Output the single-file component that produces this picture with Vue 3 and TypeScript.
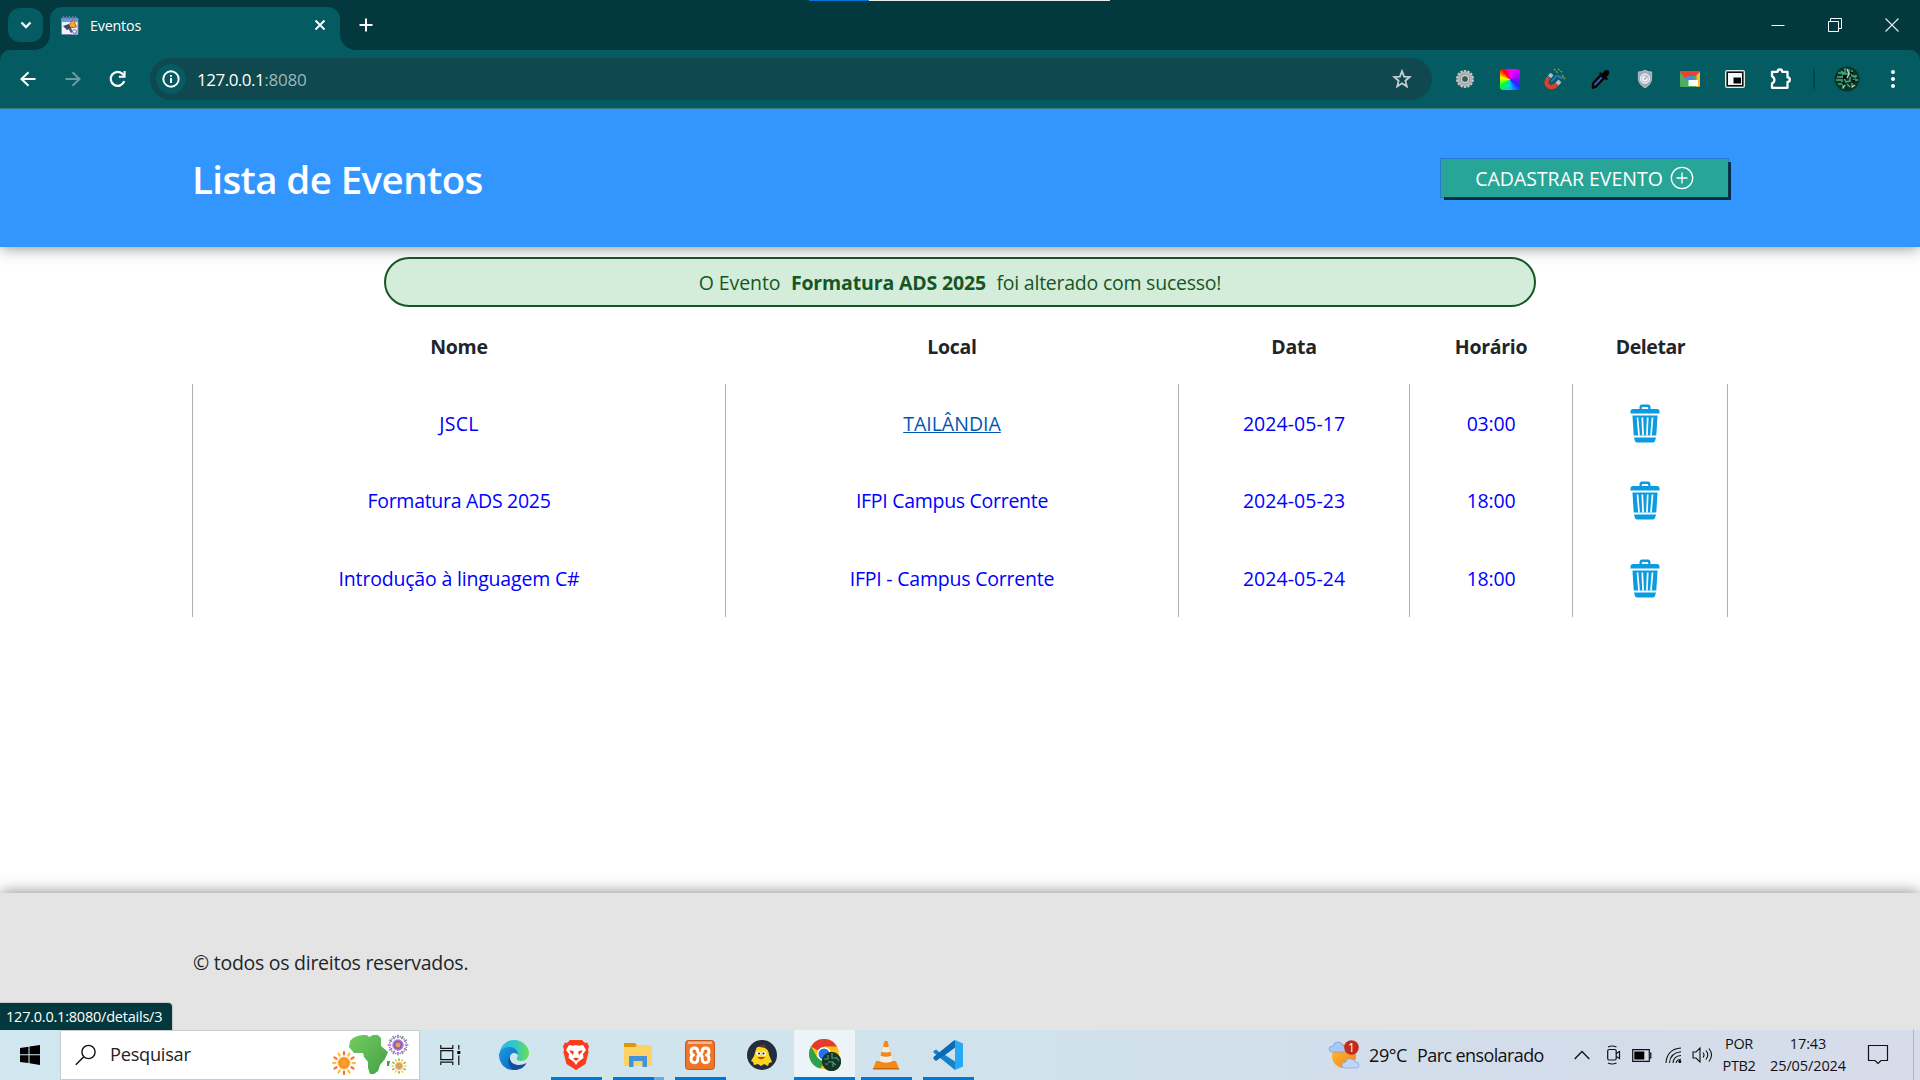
<script setup lang="ts">
interface Cell { text: string; ls: number; hover?: boolean }
interface Evento { id: number; cells: Cell[] }

const headings: Cell[] = [
  { text: 'Nome', ls: -0.25 },
  { text: 'Local', ls: -0.3 },
  { text: 'Data', ls: -0.3 },
  { text: 'Horário', ls: -0.3 },
  { text: 'Deletar', ls: -0.45 },
]

const eventos: Evento[] = [
  {
    id: 3,
    cells: [
      { text: 'JSCL', ls: 0.3 },
      { text: 'TAILÂNDIA', ls: 0 },
      { text: '2024-05-17', ls: 0.05 },
      { text: '03:00', ls: -0.2 },
    ],
  },
  {
    id: 4,
    cells: [
      { text: 'Formatura ADS 2025', ls: -0.29 },
      { text: 'IFPI Campus Corrente', ls: -0.29 },
      { text: '2024-05-23', ls: 0.05 },
      { text: '18:00', ls: -0.2 },
    ],
  },
  {
    id: 5,
    cells: [
      { text: 'Introdução à linguagem C#', ls: -0.19 },
      { text: 'IFPI - Campus Corrente', ls: -0.21 },
      { text: '2024-05-24', ls: 0.05 },
      { text: '18:00', ls: -0.2 },
    ],
  },
]
eventos[0].cells[1].hover = true

const rays = [0, 30, 60, 90, 120, 150, 180, 210, 240, 270, 300, 330]
const teeth = Array.from({ length: 14 }, (_, i) => (i * 360) / 14)
</script>

<template>
  <div class="screen">
    <div class="tabstrip">
      <i class="topline"></i>
      <button class="tab-search">
        <svg width="12" height="12" viewBox="0 0 12 12"><path d="M1.500 3.500 6 8l4.500-4.500" fill="none" stroke="#fff" stroke-width="2.300" /></svg>
      </button>
      <div class="tab">
        <svg class="favicon" width="20" height="21" viewBox="0 0 20 21">
          <rect x="1.500" y="3" width="16.500" height="16.500" rx="1" fill="#f1f1f8" stroke="#7c83ad" />
          <path d="M1.500 3h16.500v4H1.500z" fill="#5b9de8" />
          <path d="M3.500 1v3M6.500 1v3M9.500 1v3M12.500 1v3M15.500 1v3" stroke="#7d6e9c" stroke-width="1.200" />
          <path d="m8.500 10 5-5.500 3 7.500-7 1z" fill="#f9a72b" stroke="#a84a26" stroke-width=".8" />
          <path d="m3 11 6-2 2 4-4 2z" fill="#3c4563" />
          <path d="m8 13 3 5 2-1-2-4z" fill="#4e5880" />
          <path d="M18 14v5.500h-6z" fill="#adb4dc" />
          <circle cx="14.500" cy="16.500" r="1.800" fill="#fff" stroke="#6372ad" />
        </svg>
        <span class="tab-title">Eventos</span>
        <svg class="tab-close" width="12" height="12" viewBox="0 0 12 12"><path d="m1.500 1.500 9 9m0-9-9 9" stroke="#fff" stroke-width="1.900" /></svg>
      </div>
      <svg class="new-tab" width="14" height="14" viewBox="0 0 14 14"><path d="M7 .5v13M.5 7h13" stroke="#fff" stroke-width="2" /></svg>
      <div class="win-controls">
        <span><svg width="14" height="14" viewBox="0 0 14 14"><path d="M.5 7.500h13" stroke="#fff" /></svg></span>
        <span><svg width="14" height="14" viewBox="0 0 14 14"><path d="M.5 3.500h10v10H.5zM2.500 3.500v-3h11v10h-3" fill="none" stroke="#fff" /></svg></span>
        <span><svg width="14" height="14" viewBox="0 0 14 14"><path d="m.5.5 13 13m0-13-13 13" stroke="#dfe7e8" stroke-width="1.200" /></svg></span>
      </div>
    </div>

    <div class="toolbar-wrap">
      <div class="toolbar">
        <div class="nav">
          <svg width="20" height="20" viewBox="0 0 20 20"><path d="M17.500 10H4m6.500-6.700L3.500 10l7 6.700" fill="none" stroke="#fff" stroke-width="2.100" /></svg>
          <svg width="20" height="20" viewBox="0 0 20 20"><path d="M2.500 10H16M9.500 3.300l7 6.700-7 6.700" fill="none" stroke="#6a9da0" stroke-width="2" /></svg>
          <svg width="20" height="20" viewBox="0 0 20 20"><path d="M16.300 12.200A7 7 0 1 1 14.800 5l1.700 1.700" fill="none" stroke="#fff" stroke-width="2.200" /><path d="M17.600 2v6.700h-6.700v-2h4.700V2z" fill="#fff" /></svg>
        </div>
        <div class="omnibox">
          <span class="info">
            <svg width="18" height="18" viewBox="0 0 18 18"><circle cx="9" cy="9" r="7.700" fill="none" stroke="#fff" stroke-width="1.900" /><path d="M9 8v5M9 4.900v1.900" stroke="#fff" stroke-width="2" /></svg>
          </span>
          <span class="url">127.0.0.1</span><span class="port">:8080</span>
          <svg class="star" width="20" height="20" viewBox="0 0 20 20"><path d="m10 2.200 2.100 5.400 5.700.4-4.400 3.700 1.400 5.700-4.800-3.100-4.800 3.100 1.400-5.700L2.200 8l5.700-.4z" fill="none" stroke="#c4cfd1" stroke-width="1.800" /></svg>
        </div>
        <div class="extensions">
          <svg width="20" height="20" viewBox="0 0 20 20">
            <rect v-for="t in teeth" :key="t" x="8.700" y="1" width="2.600" height="4" rx=".5" fill="#c6c6c6" :transform="`rotate(${t} 10 10)`" />
            <circle cx="10" cy="10" r="7.300" fill="#b4b4b4" />
            <circle cx="10" cy="10" r="4.700" fill="#d6d6d6" stroke="#999" />
            <circle cx="10" cy="10" r="2.600" fill="#17676b" stroke="#555" stroke-width=".8" />
          </svg>
          <i class="wheel"></i>
          <svg width="22" height="22" viewBox="0 0 22 22">
            <path d="M5 9.500c-4 4-3 7 0 9 3 1.500 6 0 9-3.500" fill="none" stroke="#d9412f" stroke-width="4.300" />
            <path d="m5.500 9 2.500-3M13 16l3-3" stroke="#a9bfd0" stroke-width="4" />
            <path d="M7 13c3 1 3-6 7-5 2 1 3 3 6 1" fill="none" stroke="#2877c6" stroke-width="2" />
            <path d="m10 1 4 4m0-4 5 4m-1 2 3 4" stroke="#9d9733" stroke-width="1.300" stroke-dasharray="2 1.200" />
          </svg>
          <svg width="20" height="22" viewBox="0 0 20 22">
            <path d="m3 15.500 8-8.500 3 3-8 8.500-3 1z" fill="#3e59c5" stroke="#050505" stroke-width="2.400" />
            <path d="M9 5.500 10.500 4l2 1.500C14 2 18 1 19 3.500s-1 4.500-2.500 5.500L18 11l-1.500 1.500z" fill="#050505" />
          </svg>
          <svg class="shield" width="16" height="20" viewBox="0 0 18 22">
            <path d="M9 1c2.500 1.500 5 2 7.500 2v7c0 5-3 8.500-7.500 11-4.500-2.500-7.500-6-7.500-11V3C4 3 6.500 2.500 9 1z" fill="#a3a9ba" stroke="#cfd4de" stroke-width=".8" />
            <circle cx="9" cy="10.500" r="5.200" fill="#bcc3d2" stroke="#f1f3f7" stroke-width="1.300" />
            <path d="M11.500 10.500A2.500 2.500 0 1 1 9 8" fill="none" stroke="#fff" stroke-width="1.300" />
          </svg>
          <svg width="22" height="18" viewBox="0 0 22 18">
            <rect x="1" y="1" width="20" height="16" rx="1.500" fill="#4fae5c" />
            <path d="M2 1h18l1 1v4H11L6 8 1 2z" fill="#ea4335" />
            <path d="M17.500 5 21 2v14l-1 1h-2.500z" fill="#fbbc2e" />
            <path d="M14.500 5.500V11H9L5.500 8z" fill="#4285f4" />
            <path d="M9.500 10h9.500v6H9.500z" fill="#fff" />
          </svg>
          <svg width="22" height="20" viewBox="0 0 22 20">
            <rect x="1" y="1" width="20" height="18" rx="2" fill="#e4eaea" />
            <rect x="3.200" y="3.200" width="15.600" height="13.600" fill="#f5f8f8" stroke="#0c0f10" stroke-width="1.600" />
            <rect x="9.500" y="8.500" width="7.500" height="6" fill="#05080a" />
          </svg>
          <svg class="puzzle" width="22" height="22" viewBox="0 0 22 22"><path d="M2 3.800h5.600a2.300 2.300 0 0 1 4.600 0h5.300v5.600a2.300 2.300 0 0 1 0 4.600v5.800H2v-4.400q2.400-.8 2.400-3.400T2 8.200z" fill="none" stroke="#fff" stroke-width="2.300" stroke-linejoin="round" /></svg>
        </div>
        <i class="divider"></i>
        <svg class="avatar" width="26" height="26" viewBox="0 0 26 26">
          <circle cx="13" cy="13" r="12.500" fill="#0f3426" />
          <path d="M4 7h5v4H3m8-9v6h4V3m3 1v6h5M2 14h6v4H4m6-6 2 4 4-1v-4m3 3h5m-6 3v5m-9-5v6m4-5 3 3M7 5l4 3m8 2 3 2" fill="none" stroke="#3fae7e" stroke-width="1.400" />
          <path d="M9 9h4v4H9zM16 6h3v3M7 16h3v4M17 14h4v3" fill="#04100b" />
          <path d="m13 3 2 5-2 4m-2 7-2 3m9-1 3-2" fill="none" stroke="#b5e2cb" stroke-width="1.300" />
        </svg>
        <svg class="menu" width="6" height="20" viewBox="0 0 6 20"><g fill="#fff"><circle cx="3" cy="3" r="2" /><circle cx="3" cy="10" r="2" /><circle cx="3" cy="17" r="2" /></g></svg>
      </div>
    </div>

    <div class="page">
      <header class="header">
        <h1>Lista de Eventos</h1>
        <a class="btn">
          <span>CADASTRAR EVENTO</span>
          <svg width="24" height="24" viewBox="0 0 24 24"><circle cx="12" cy="12" r="10.700" fill="none" stroke="#fff" stroke-width="1.300" /><path d="M12 6.500v11M6.500 12h11" stroke="#fff" stroke-width="1.300" /></svg>
        </a>
      </header>

      <main class="main">
        <div class="alert"><span class="first">O Evento</span><strong>Formatura ADS 2025</strong><span class="tight">foi alterado com sucesso!</span></div>
        <div class="grid head">
          <div v-for="h in headings" :key="h.text" :style="{ letterSpacing: h.ls + 'px' }">{{ h.text }}</div>
        </div>
        <div v-for="e in eventos" :key="e.id" class="grid row">
          <div v-for="(c, i) in e.cells" :key="i"><a :class="{ hover: c.hover }" :style="{ letterSpacing: c.ls + 'px' }">{{ c.text }}</a></div>
          <div class="last">
            <svg width="30" height="39" viewBox="0 0 30 39" fill="#0a9be0">
              <path d="M9.500 6V3.500Q9.500.5 12 .5h6q2.500 0 2.500 3V6h-2.300V4q0-1-1-1h-4.400q-1 0-1 1v2z" />
              <path d="M3 5h24q2.500 0 2.500 2.500v2H.5v-2Q.5 5 3 5zM4 33.500h22l-.8 3q-.4 2-2.200 2H7q-1.800 0-2.200-2z" />
              <path d="M2.500 11.500h25l-1.200 20H3.700z" />
              <path d="m7.500 13.500 1.500 18M12.300 13.500l.8 18M17.700 13.500l-.8 18M22.500 13.500 21 31.500" stroke="#fff" stroke-width="1.700" />
            </svg>
          </div>
        </div>
      </main>

      <footer class="footer">© todos os direitos reservados.</footer>
      <div class="status">127.0.0.1:8080/details/3</div>
    </div>

    <div class="taskbar">
      <div class="start">
        <svg width="20" height="20" viewBox="0 0 20 20"><path d="M0 3 8.500 1.700v7.600H0zM9.500 1.500 20 0v9.300H9.500zM0 10.300h8.500v7.800L0 17zM9.500 10.300H20V20L9.500 18.300z" /></svg>
      </div>
      <div class="search">
        <svg width="22" height="22" viewBox="0 0 22 22"><circle cx="13.500" cy="8" r="6.600" fill="none" stroke="#111" stroke-width="1.400" /><path d="M8.800 12.800.8 20.800" stroke="#111" stroke-width="1.500" /></svg>
        <span>Pesquisar</span>
        <svg class="doodle" width="80" height="44" viewBox="0 0 80 44">
          <defs><linearGradient id="afr" x2="1" y2="1"><stop stop-color="#74cc60" /><stop offset="1" stop-color="#43a047" /></linearGradient></defs>
          <path d="M22 4q5-3 10-3h4l2 2 4-2h5l3 3v8l7 6-3 7-5 6-2 6-4 3h-4l-2-6v-6l-4-5-1-4H23l-5-6 1-6z" fill="url(#afr)" />
          <path d="M56 27h3l-1 5h-2z" fill="#43a047" />
          <g transform="translate(13 29)">
            <rect v-for="r in rays" :key="r" x="-1.100" y="-12" width="2.200" height="4.500" rx="1" :fill="r % 60 ? '#fdc12e' : '#f4703e'" :transform="`rotate(${r})`" />
            <circle r="6.500" fill="#fdb52c" /><circle r="4.200" fill="#f9a02c" stroke="#f06f3a" />
          </g>
          <g transform="translate(67 11)">
            <rect v-for="r in rays" :key="r" x="-.8" y="-10.500" width="1.600" height="3.800" rx=".8" fill="#a368d8" :transform="`rotate(${r})`" />
            <rect v-for="r in rays" :key="'g' + r" x="-.8" y="-9.500" width="1.600" height="1.800" rx=".8" fill="#57b15a" :transform="`rotate(${r + 15})`" />
            <circle r="5.700" fill="#a572d9" /><circle r="3.300" fill="#e0a24c" stroke="#7444b0" />
          </g>
          <g transform="translate(68 32)">
            <rect v-for="r in rays" :key="r" x="-.8" y="-7.800" width="1.600" height="2.800" rx=".8" :fill="r % 60 ? '#f6c94b' : '#6fb84c'" :transform="`rotate(${r})`" />
            <circle r="4.300" fill="#f5c955" /><circle r="2.400" fill="#d7a56b" stroke="#b980a8" stroke-width=".7" />
          </g>
        </svg>
      </div>
      <div class="taskview">
        <svg width="22" height="20" viewBox="0 0 22 20"><path d="M.8 5.700h12v9H.8zM.8 0v3.300h12V0M.8 20v-2.800h12V20" fill="none" stroke="#111" stroke-width="1.200" /><path d="M18.800 0v4.500M18.800 10.500V20" stroke="#111" stroke-width="1.200" /><path d="M17.300 6h3v3h-3z" /></svg>
      </div>
      <div class="app">
        <svg width="30" height="30" viewBox="0 0 30 30">
          <defs>
            <linearGradient id="e1" x2="1"><stop stop-color="#2db5ee" /><stop offset=".55" stop-color="#34c6c4" /><stop offset="1" stop-color="#6be04f" /></linearGradient>
            <linearGradient id="e2" y2="1"><stop stop-color="#1b9de2" /><stop offset="1" stop-color="#0c62bd" /></linearGradient>
          </defs>
          <path d="M1 11C3 4 9 0 15 0c9 0 15 7 15 13 0 5-4 8-8 8-4 0-5-2-4-3 2-3 0-8-6-8-5 0-9 1-12 6z" fill="url(#e1)" />
          <path d="M0 15C1 10 5 7 10 7c6 0 9 4 9 8-2-3-8-3-8 3 0 5 3 9 7 11-2 1-3 1-4 1C6 30 0 23 0 15z" fill="url(#e2)" />
          <path d="M11 17c-1 5 4 8 9 8 3 0 5-1 7.500-2C25 28 20 30 16 30 9 28 8 20 11 17z" fill="#134f9c" />
        </svg>
      </div>
      <div class="app open">
        <svg width="28" height="30" viewBox="0 0 28 30">
          <path d="M8 0h12l3 3 2-.5 2 4-1 3 .5 3-3 11.500-9.500 6-9.500-6-3-11.500.5-3-1-3 2-4L5 3z" fill="#fb3b1c" />
          <path d="m7 5 4 .8 3-.8 3 .8 4-.8 3 5-3 4 .5 4-5.500 4-2 3-2-3-5.500-4 .5-4-3-4z" fill="#fff" />
          <path d="m7.500 10 4.500 1.500L11 15l-2.500-2.500M20.500 10 16 11.500l1 3.500 2.500-2.500M11 18.500l3-1 3 1-3 2.500z" fill="#fb3b1c" />
        </svg>
      </div>
      <div class="app open multi">
        <svg width="28" height="24" viewBox="0 0 28 24"><path d="M0 0h11l2 2v4H0z" fill="#dd9a05" /><path d="M0 4h11l2-2h15v21H0z" fill="#fed267" /><path d="M5 24V13h18v11h-4.500v-6h-9v6z" fill="#3f94da" /></svg>
      </div>
      <div class="app open">
        <svg width="30" height="30" viewBox="0 0 30 30">
          <rect x=".5" y=".5" width="29" height="29" rx="3" fill="#ee7527" stroke="#c4571b" /><path d="M3 1.500h24v2.500H3z" fill="#f7b78e" />
          <path d="M12.800 11.500Q12.800 8 9.500 8 6 8 6 11.500q0 3 2.500 3.500Q6 15.500 6 19q0 3.700 3.500 3.700 3.300 0 3.300-3.700v-1.500q0-2.500 2.200-2.500t2.200 2.500V19q0 3.700 3.300 3.700Q24 22.700 24 19q0-3.500-2.500-4 2.500-.5 2.500-3.500Q24 8 20.500 8q-3.300 0-3.300 3.500 0 2-2.200 2t-2.200-2z" fill="none" stroke="#fff" stroke-width="2.900" stroke-linejoin="round" />
        </svg>
      </div>
      <div class="app">
        <svg width="30" height="30" viewBox="0 0 30 30">
          <circle cx="15" cy="15" r="15" fill="#242c3f" /><path d="m12 6 6-2 1 6-5 2z" fill="#5c3b2c" />
          <path d="M9 9q1-3 4-2l5 1q4 2 4 7l3 7-3 1-1 3-4-2-3 2-3-2-4 1-1-3-2-1 3-5z" fill="#fcd51c" />
          <circle cx="11.500" cy="13.500" r="2.300" fill="#fff" /><circle cx="17" cy="13.500" r="2.300" fill="#fff" /><circle cx="12" cy="13.500" r="1.100" fill="#222" /><circle cx="16.500" cy="13.500" r="1.100" fill="#222" />
          <path d="M11 17.500q3 3 6.500 0z" fill="#e5592b" stroke="#a03a17" stroke-width=".8" />
        </svg>
      </div>
      <div class="app open active">
        <svg width="32" height="32" viewBox="0 0 32 32">
          <circle cx="15" cy="15" r="15" fill="#fbc116" />
          <path d="M15 15 2 7.500A15 15 0 0 1 28 7.500H15z" fill="#e33b2e" />
          <path d="M2 7.500 8.500 18.800 15 22.500 11.500 29.600A15 15 0 0 1 2 7.500z" fill="#2da14c" />
          <circle cx="15" cy="15" r="7" fill="#fff" /><circle cx="15" cy="15" r="5.500" fill="#2374ea" />
          <circle cx="22.500" cy="22.500" r="9.700" fill="#143528" />
          <path d="M15 20h4v-4m4-2v5h5m-9 4h5v5m-8-3h3m8-7 3 4m-7 1 4 3" fill="none" stroke="#4b9d77" stroke-width="1.200" />
        </svg>
      </div>
      <div class="app open">
        <svg width="26" height="30" viewBox="0 0 26 30">
          <path d="M3 21h20l3 8H0z" fill="#f78b12" /><path d="M0 28h26v1.500H0z" fill="#c9640a" />
          <path d="M11.500 1h3l6 22q-7.500 4-15 0z" fill="#f4861b" /><path d="m10 6.500-1.500 5q4.500 2 9 0l-1.500-5q-3 1.300-6 0zM7.400 15.500 6 21q7 3.500 14 0l-1.400-5.500q-5.600 2.500-11.200 0z" fill="#eceef0" />
        </svg>
      </div>
      <div class="app open">
        <svg width="30" height="30" viewBox="0 0 30 30"><path d="M22 0 7.500 13 3 9.500.5 11v1.500L22 30V21.500L12 15l10-7.500z" fill="#1781cb" /><path d="M22 7.500 3 21 .5 19v-2L21.500 0z" fill="#0b6cb5" /><path d="m22 0 8 3.500v23L22 30z" fill="#29a8f3" /></svg>
      </div>

      <div class="tray">
        <svg width="32" height="32" viewBox="0 0 32 32">
          <defs><linearGradient id="sun" y2="1"><stop stop-color="#fbc02d" /><stop offset="1" stop-color="#f5811f" /></linearGradient></defs>
          <circle cx="16" cy="17" r="12" fill="url(#sun)" />
          <path d="M4 13q-3-.5-3-3 0-3 4-3 1-4 5-4t5 4q4 0 4 3t-3 3z" fill="#a9c8f5" stroke="#6f9ae0" stroke-width=".7" />
          <path d="M17 29q-3 0-3-3t4-3q1-4 5-3 3 0 4 3 4 0 4 3t-3 3z" fill="#bdd6fa" stroke="#7ba6e6" stroke-width=".7" />
          <circle cx="23.500" cy="8.500" r="7.300" fill="#c42b1f" />
          <text x="23.500" y="12.800" text-anchor="middle" font-size="12" fill="#fff">1</text>
        </svg>
        <span class="temp">29°C</span>
        <span class="weather">Parc ensolarado</span>
        <svg class="chev" width="16" height="10" viewBox="0 0 16 10"><path d="m.7 9 7.300-7.500L15.300 9" fill="none" stroke="#111" stroke-width="1.300" /></svg>
        <svg class="meet" width="16" height="22" viewBox="0 0 16 22"><rect x="1.700" y="5.500" width="8.500" height="10.500" rx="1.500" fill="none" stroke="#111" stroke-width="1.200" /><path d="m10.200 9.500 3.300-2v7l-3.300-2M2 3Q6 1 10.500 3M2 19q4 2 8.500 0" fill="none" stroke="#111" stroke-width="1.200" /></svg>
        <svg class="battery" width="21" height="13" viewBox="0 0 21 13"><path d="M.7.7h16.600v11.600H.7zM17.300 4h1.500v5h-1.500" fill="none" stroke="#111" stroke-width="1.200" /><path d="M2.300 2.500h10v8h-10z" /></svg>
        <svg class="wifi" width="18" height="18" viewBox="0 0 18 18"><g fill="none" stroke="#111" stroke-width="1.100"><path d="M1 17Q2 3 16 2M4.500 17Q5 7 16 5.800M8 17q.5-7 8-7.500M11 17q.5-3.500 5-3.800" /></g><circle cx="14.800" cy="15.500" r="1.500" /></svg>
        <svg class="volume" width="22" height="18" viewBox="0 0 22 18"><path d="M1 6h3l4-4v14l-4-4H1zM11 6.500q2 2.500 0 5M14 4.500q3.500 4.500 0 9M17 2.500q5 6.500 0 13" fill="none" stroke="#111" stroke-width="1.100" /></svg>
        <div class="two lang"><span>POR</span><span>PTB2</span></div>
        <div class="two clock"><span>17:43</span><span>25/05/2024</span></div>
        <svg class="note" width="22" height="22" viewBox="0 0 22 22"><path d="M1.500 1.500h19v15h-6.500l-3 3-3-3H1.500z" fill="none" stroke="#111" stroke-width="1.200" /></svg>
        <i class="show-desktop"></i>
      </div>
    </div>
  </div>
</template>

<style>
body { margin: 0; overflow: hidden; }
</style>

<style scoped>
* { box-sizing: border-box; }
svg { display: block; flex: none; }
.screen {
  width: 1920px;
  height: 1080px;
  display: flex;
  flex-direction: column;
  overflow: hidden;
  font: 19.5px "Open Sans", "Noto Sans", sans-serif;
  white-space: nowrap;
  background: #fff;
}

/* browser frame */
.tabstrip { position: relative; display: flex; flex: none; height: 50px; padding-left: 8px; background: #03393e; z-index: 2; }
.topline { position: absolute; top: 0; left: 809px; width: 301px; height: 1px; background: linear-gradient(90deg, #0078d7 60px, #e8ebe6 60px); }
.tab-search { width: 35px; height: 34px; margin: 8px 7px 0 0; padding: 0; border: 0; border-radius: 12px; background: #045b61; display: flex; align-items: center; justify-content: center; }
.tab { position: relative; display: flex; align-items: center; width: 290px; height: 43px; margin-top: 7px; padding: 0 14px 7px 10px; border-radius: 12px 12px 0 0; background: #045b61; }
.tab::before, .tab::after { content: ""; position: absolute; bottom: 0; width: 15px; height: 15px; }
.tab::before { left: -15px; background: radial-gradient(circle at 0 0, transparent 14.5px, #045b61 15px); }
.tab::after { right: -15px; background: radial-gradient(circle at 100% 0, transparent 14.5px, #045b61 15px); }
.tab-title { margin-left: 10px; color: #fff; font-size: 14.3px; letter-spacing: -0.2px; }
.tab-close { margin-left: auto; }
.new-tab { margin: 18px 0 0 19px; }
.win-controls { display: flex; height: 49px; margin-left: auto; }
.win-controls span { width: 57px; display: flex; align-items: center; justify-content: center; }
.toolbar-wrap { position: relative; z-index: 2; flex: none; height: 59px; background: #03393e; }
.toolbar { display: flex; align-items: center; height: 59px; padding-left: 18px; background: #045b61; border-bottom: 1px solid #3a7b85; border-radius: 10px 10px 0 0; }
.nav { display: flex; gap: 25px; width: 132px; }
.omnibox { display: flex; align-items: center; width: 1282px; height: 42px; padding: 0 20px 0 6px; border-radius: 21px; background: #0f484e; font-size: 17px; }
.info { width: 30px; height: 30px; margin-right: 11px; border-radius: 50%; background: #045b61; display: flex; align-items: center; justify-content: center; }
.url { color: #fff; letter-spacing: -0.5px; }
.port { color: #9fb6b8; letter-spacing: -0.2px; }
.star { margin-left: auto; }
.extensions { display: grid; grid-template-columns: repeat(8, 45px); margin-left: 10px; align-items: center; justify-items: center; }
.wheel { width: 20px; height: 21px; border-radius: 3px; background: conic-gradient(#f0f, #c0f 15%, #22f 35%, #0cf 50%, #0f3 65%, #ff0 78%, #f00 90%, #f0f); }
.puzzle { transform: translateX(1px); }
.divider { width: 2px; height: 20px; margin-left: 11px; background: #03474d; }
.avatar { margin-left: 19px; }
.menu { margin-left: 30px; }

/* page */
.page { position: relative; display: flex; flex-direction: column; flex: 1; min-height: 0; }
.header { display: flex; align-items: center; justify-content: space-between; flex: none; height: 138px; padding: 0 192px; background: #3396ff; box-shadow: 0 0 15px rgba(0, 0, 0, 0.5); }
h1 { margin: 0; padding-top: 1px; color: #fff; font-size: 38.5px; font-weight: 600; letter-spacing: -0.6px; }
.btn { display: flex; align-items: center; justify-content: center; gap: 7px; width: 287px; height: 38px; color: #fff; background: #27a697; box-shadow: 0 0 0 1px rgba(20, 70, 120, 0.35), 3px 3px 0 #092b41; letter-spacing: -0.02px; }
.btn span { padding-top: 1px; }
.main { display: flex; flex-direction: column; flex: 1; padding: 10px 192px 0; }
.alert { display: flex; align-items: center; justify-content: center; gap: 10.5px; width: 1152px; height: 50px; margin: 0 auto; color: #155724; background: #d4edda; border: 2px solid #155724; border-radius: 25px; z-index: 1; }
.first { letter-spacing: -0.1px; }
.alert strong { letter-spacing: -0.15px; }
.tight { letter-spacing: -0.24px; }
.grid { display: grid; grid-template-columns: 533px 453px 231px 163px 156px; align-items: center; text-align: center; }
.head { height: 77px; color: #212529; font-weight: 700; }
.head > div { padding: 1px 0 0 1px; }
.row { height: 77.67px; align-items: stretch; }
.row > div { display: flex; align-items: center; justify-content: center; border-left: 1px solid #b0b0b0; padding-top: 0.8px; }
.row > .last { border-right: 1px solid #b0b0b0; padding-right: 10px; }
.row a { color: #00f; }
.row a.hover { color: #0056b3; text-decoration: underline; }
.footer { display: flex; align-items: center; flex: none; height: 137px; padding: 2px 193px 0; color: #212529; background: #e4e4e4; box-shadow: 0 0 15px rgba(0, 0, 0, 0.5); letter-spacing: -0.27px; }
.status { position: absolute; left: 0; bottom: 0; width: 172px; height: 27px; padding-left: 6px; color: #fff; background: #03393e; border-radius: 0 4px 0 0; box-shadow: 0 0 1px 1px #c4c9ca; font-size: 14.5px; line-height: 27px; letter-spacing: -0.22px; }

/* taskbar */
.taskbar { position: relative; display: flex; flex: none; height: 50px; color: #111; background: linear-gradient(90deg, #d0e7f0, #d0e3ed 50%, #d3dcea 80%, #d7dcea); }
.start, .taskview, .app { display: flex; align-items: center; justify-content: center; }
.start { width: 60px; }
.search { display: flex; align-items: center; width: 360px; padding: 0 8px 0 14px; background: #fff; border: 1px solid #c6ccd0; font-size: 18.2px; letter-spacing: -0.25px; color: #222; }
.search span { margin-left: 13px; padding-bottom: 2px; }
.doodle { margin: 2px 0 0 auto; }
.taskview { width: 63px; padding-right: 1px; }
.app { position: relative; width: 62px; }
.open::after { content: ""; position: absolute; left: 6px; right: 5px; bottom: 0; height: 3px; background: #0078d7; }
.multi::after { background: linear-gradient(90deg, #0078d7 41px, #67ade3 41px); }
.active { padding-left: 2px; background: linear-gradient(#ecf4f8, #ecf4f8) 1px 0 / 61px 100% no-repeat; }
.active::after { left: 1px; right: 0; }
.tray { display: flex; align-items: center; margin-left: 349px; flex: 1; font-size: 18px; }
.temp { width: 48px; margin-left: 9px; letter-spacing: -0.4px; }
.weather { width: 157px; letter-spacing: -0.6px; }
.meet { margin-left: 16px; }
.battery { margin-left: 10px; }
.wifi { margin-left: 12px; }
.volume { margin-left: 9px; }
.two { display: flex; flex-direction: column; align-items: center; font-size: 14.5px; line-height: 22px; }
.lang { width: 46px; margin-left: 2px; letter-spacing: -0.4px; }
.clock { width: 92px; letter-spacing: -0.1px; }
.note { margin-left: 13px; }
.show-desktop { width: 1px; height: 50px; margin-left: 24px; background: #a8b2c0; }
</style>
